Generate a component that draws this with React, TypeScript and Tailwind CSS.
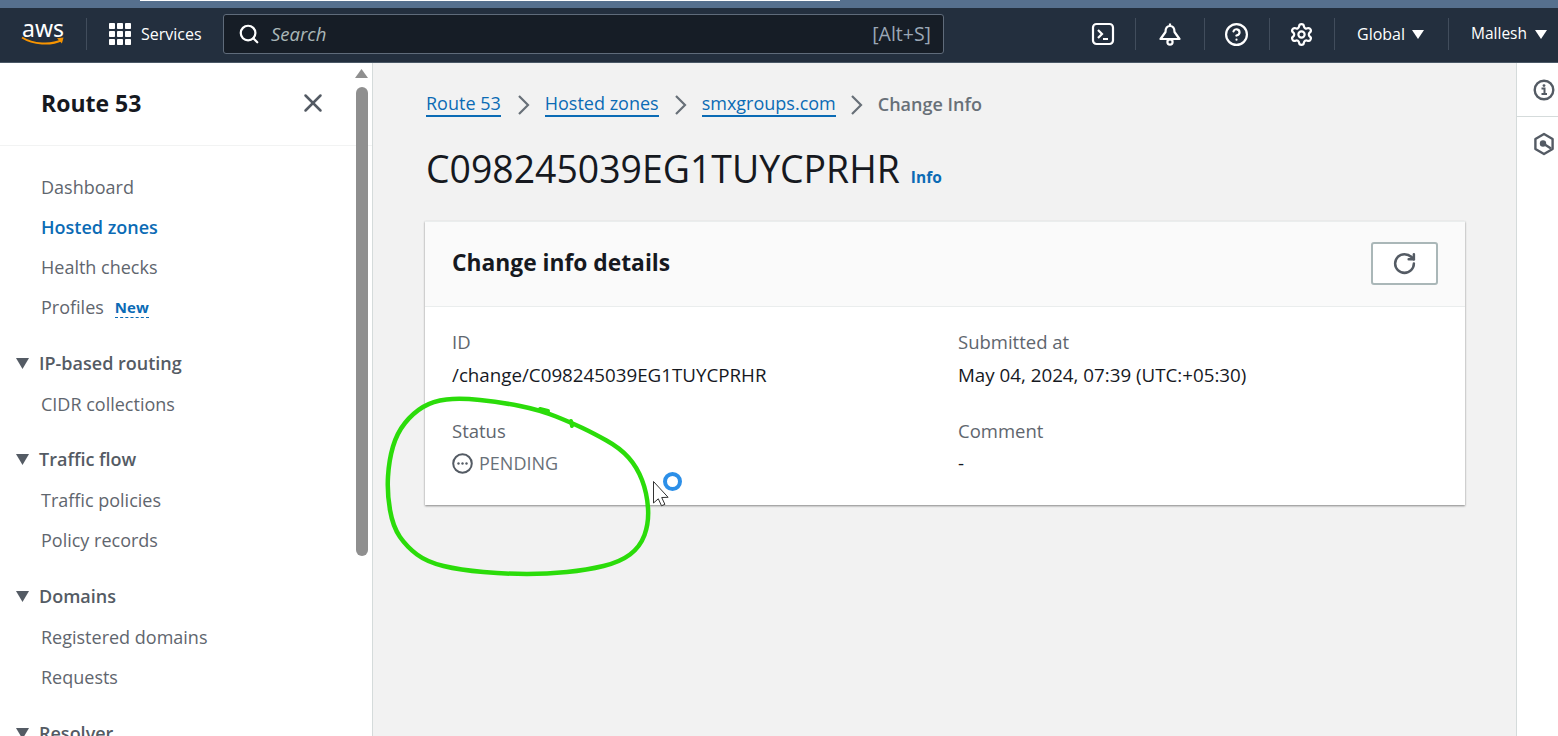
import React from "react";
import { Search, X, CircleHelp, Settings, RotateCw } from "lucide-react";

const font = { fontFamily: '"Open Sans", "Noto Sans", sans-serif' };

function Item({ children, active }: { children: React.ReactNode; active?: boolean }) {
  return (
    <div className={`h-10 flex items-center pl-[41px] text-[18px] ${active ? "font-semibold text-[#0b6bb5]" : "text-[#5f666e]"}`}>
      {children}
    </div>
  );
}

function Section({ title, items, gap }: { title: string; items: string[]; gap: string }) {
  return (
    <div className={gap}>
      <div className="h-[41px] flex items-center pl-[16px] gap-[10px] text-[18px] font-semibold text-[#545b64]">
        <svg width="13" height="11" viewBox="0 0 13 11"><path d="M0 0h13L6.5 11z" fill="#545b64" /></svg>
        <span>{title}</span>
      </div>
      {items.map((i) => <Item key={i}>{i}</Item>)}
    </div>
  );
}

function Crumb({ children, className }: { children: React.ReactNode; className?: string }) {
  return <span className={`text-[18px] text-[#0b6bb5] border-b-2 border-[#0b6bb5] leading-[23px] ${className ?? ""}`}>{children}</span>;
}

function Chev() {
  return (
    <svg width="13" height="20" viewBox="0 0 13 20" fill="none" stroke="#687078" strokeWidth="2.2">
      <path d="M2 1l9 9-9 9" />
    </svg>
  );
}

function Sep() {
  return <div className="w-px h-8 bg-[#414d5c]" />;
}

function Caret() {
  return <svg width="12" height="9" viewBox="0 0 12 9"><path d="M0 0h12L6 9z" fill="#fff" /></svg>;
}

function Field({ label, value, tight }: { label: string; value: React.ReactNode; tight?: boolean }) {
  return (
    <div>
      <div className="text-[18.5px] leading-[24px] text-[#5f666e]">{label}</div>
      <div className={`${tight ? "mt-[8px]" : "mt-[9px]"} text-[18.75px] leading-[24px] text-[#16191f]`}>{value}</div>
    </div>
  );
}

function smooth(p: number[][]) {
  let d = `M${(p[0][0] + p[1][0]) / 2} ${(p[0][1] + p[1][1]) / 2}`;
  for (let i = 1; i <= p.length; i++) {
    const a = p[i % p.length];
    const b = p[(i + 1) % p.length];
    d += ` Q${a[0]} ${a[1]} ${(a[0] + b[0]) / 2} ${(a[1] + b[1]) / 2}`;
  }
  return d;
}

const loop = [[572,423],[540,410],[500,402],[460,398],[433,401],[413,413],[397,433],[389,460],[387,493],[393,527],[407,547],[427,562],[460,570],[507,574],[547,574],[587,570],[620,562],[640,547],[649,523],[647,493],[637,467],[620,448],[593,433]];

export default function App() {
  return (
    <div style={font} className="relative h-[736px] w-[1558px] overflow-hidden bg-[#f2f2f2] flex flex-col">
      <div className="h-2 shrink-0 bg-[#56708e]">
        <div className="ml-[140px] w-[700px] h-px bg-white" />
      </div>
      <header className="h-[55px] pb-[2px] shrink-0 bg-[#232f3e] flex items-center text-white border-b border-[#4a5866]">
        <div className="w-[86px] flex flex-col items-center shrink-0">
          <span className="text-[23px] leading-[18px] text-white -mt-[3px]" style={{ fontFamily: '"Noto Sans", sans-serif' }}>aws</span>
          <svg width="44" height="10" viewBox="0 0 44 10" className="-mt-[1px]">
            <path d="M1 1.5C12 8.5 30 9.5 41 4" stroke="#f79400" strokeWidth="2" fill="none" />
            <path d="M36 2.2l6.5-.6-1.6 6z" fill="#f79400" />
          </svg>
        </div>
        <Sep />
        <div className="flex items-center ml-[22px] gap-[10px] w-[114px] shrink-0">
          <svg width="22" height="22" viewBox="0 0 22 22" fill="#fff">
            {[0, 8, 16].flatMap((y) => [0, 8, 16].map((x) => <rect key={`${x}${y}`} x={x} y={y} width="6" height="6" rx="0.8" />))}
          </svg>
          <span className="text-[16px]">Services</span>
        </div>
        <div className="w-[721px] h-10 shrink-0 bg-[#161d26] border border-[#5f6b7a] rounded-[3px] flex items-center pl-[14px] pr-[12px]">
          <Search size={22} strokeWidth={2.4} className="text-white" />
          <span className="ml-[11px] italic text-[18.5px] text-[#aab7b8]">Search</span>
          <span className="ml-auto text-[19.5px] text-[#9ba7b6]">[Alt+S]</span>
        </div>
        <div className="flex items-center ml-[147px] gap-0">
          <div className="w-[24px] flex justify-center">
            <svg width="24" height="24" viewBox="0 0 24 24" fill="none" stroke="#fff" strokeWidth="2.2">
              <rect x="2" y="2" width="20" height="20" rx="3.5" />
              <path d="M7 8l4 4-4 4M12 17h5" />
            </svg>
          </div>
          <div className="ml-[20px]"><Sep /></div>
          <div className="ml-[22px]">
            <svg width="24" height="24" viewBox="0 0 24 24" fill="none" stroke="#fff" strokeWidth="2.2" strokeLinejoin="round">
              <path d="M12 1.5V4M12 4C8.5 4 7.5 7 7.5 10L2.5 17H21.5L16.5 10C16.5 7 15.5 4 12 4Z" />
              <circle cx="12" cy="20" r="2.6" />
            </svg>
          </div>
          <div className="ml-[22px]"><Sep /></div>
          <div className="ml-[19px]"><CircleHelp size={25} strokeWidth={2.1} /></div>
          <div className="ml-[20px]"><Sep /></div>
          <div className="ml-[19px]"><Settings size={25} strokeWidth={2.1} /></div>
          <div className="ml-[20px]"><Sep /></div>
          <div className="ml-[22px] flex items-center gap-[7px] text-[16px]"><span>Global</span><Caret /></div>
          <div className="ml-[24px]"><Sep /></div>
          <div className="ml-[22px] flex items-center gap-[8px] text-[15.5px]"><span>Mallesh</span><Caret /></div>
        </div>
      </header>
      <div className="flex flex-1 min-h-0">
        <aside className="relative w-[373px] shrink-0 bg-white border-r border-[#d5dbdb] overflow-hidden">
          <div className="h-[83px] pb-[2px] border-b border-[#f2f3f3] flex items-center justify-between pl-[41px] pr-[44px]">
            <span className="text-[23px] font-bold text-[#16191f]">Route 53</span>
            <X size={30} strokeWidth={2} className="text-[#545b64]" />
          </div>
          <div className="pt-[21px]">
            <Item>Dashboard</Item>
            <Item active>Hosted zones</Item>
            <Item>Health checks</Item>
            <Item>
              Profiles
              <span className="ml-[11px] mt-[2px] text-[15px] leading-[19px] font-bold text-[#0b6bb5] border-b border-dashed border-[#0b6bb5]">New</span>
            </Item>
            <Section gap="mt-4" title="IP-based routing" items={["CIDR collections"]} />
            <Section gap="mt-[15px]" title="Traffic flow" items={["Traffic policies", "Policy records"]} />
            <Section gap="mt-4" title="Domains" items={["Registered domains", "Requests"]} />
            <Section gap="mt-4" title="Resolver" items={[]} />
          </div>
          <div className="absolute right-[4px] top-[6px] flex flex-col items-center w-[13px]">
            <svg width="13" height="9" viewBox="0 0 13 9"><path d="M6.5 0L13 9H0z" fill="#8f8f8f" /></svg>
            <div className="mt-[9px] w-[12px] h-[469px] rounded-[6px] bg-[#8f8f8f]" />
          </div>
        </aside>
        <main className="flex-1 min-w-0 pl-[52px] pr-[51px]">
          <div className="h-[23px] flex items-center pl-px gap-[15px] mt-[30px]">
            <Crumb className="mr-px">Route 53</Crumb>
            <Chev />
            <Crumb>Hosted zones</Crumb>
            <Chev />
            <Crumb className="-mr-px">smxgroups.com</Crumb>
            <Chev />
            <span className="text-[18px] font-semibold text-[#687078]">Change Info</span>
          </div>
          <div className="flex items-baseline mt-[31px] pl-px">
            <h1 className="text-[37.4px] leading-[44px] text-[#16191f]">C098245039EG1TUYCPRHR</h1>
            <span className="ml-[11px] text-[15.5px] font-bold text-[#0b6bb5]">Info</span>
          </div>
          <section className="mt-[30px] bg-white shadow-[0_1px_2px_rgba(0,0,0,0.45)] border-t border-[#eaeded]">
            <div className="h-[85px] pb-[2px] bg-[#fafafa] border-b border-[#eaeded] flex items-center justify-between pl-[27px] pr-[27px]">
              <h2 className="text-[22.8px] font-bold text-[#16191f]">Change info details</h2>
              <button className="w-[67px] h-[43px] bg-white border-2 border-[#aab7b8] rounded-[3px] flex items-center justify-center">
                <RotateCw size={25} strokeWidth={2.4} className="text-[#545b64]" />
              </button>
            </div>
            <div className="grid grid-cols-[506px_1fr] pl-[27px] pt-[23px] pb-[30px] gap-y-[32px]">
              <Field label="ID" value="/change/C098245039EG1TUYCPRHR" />
              <Field label="Submitted at" value="May 04, 2024, 07:39 (UTC:+05:30)" />
              <Field label="Status" tight value={
                <span className="flex items-center gap-[6px] text-[18px] text-[#687078]">
                  <svg width="21" height="21" viewBox="0 0 21 21" fill="none">
                    <circle cx="10.5" cy="10.5" r="9.3" stroke="#545b64" strokeWidth="2" />
                    <circle cx="6.5" cy="10.5" r="1.2" fill="#545b64" />
                    <circle cx="10.5" cy="10.5" r="1.2" fill="#545b64" />
                    <circle cx="14.5" cy="10.5" r="1.2" fill="#545b64" />
                  </svg>
                  PENDING
                </span>
              } />
              <Field label="Comment" tight value="-" />
            </div>
          </section>
        </main>
        <aside className="w-[42px] shrink-0 bg-white border-l border-[#d5dbdb]">
          <div className="h-[54px] border-b border-[#d5dbdb] flex items-center justify-center pl-[13px]">
            <svg width="22" height="22" viewBox="0 0 22 22" fill="none">
              <circle cx="11" cy="11" r="9.3" stroke="#545b64" strokeWidth="2.4" />
              <path d="M8.5 9.5h3v5M8.5 15h5.5" stroke="#545b64" strokeWidth="2" />
              <circle cx="11" cy="6.6" r="1.4" fill="#545b64" />
            </svg>
          </div>
          <div className="h-[56px] flex items-center justify-center pl-[13px] pb-[2px]">
            <svg width="22" height="24" viewBox="0 0 22 24" fill="none">
              <path d="M11 2l8.6 5v10L11 22l-8.6-5V7z" stroke="#545b64" strokeWidth="2.4" strokeLinejoin="round" />
              <circle cx="10" cy="11.5" r="3.2" fill="#545b64" />
              <path d="M11 12l7 4.5" stroke="#545b64" strokeWidth="2.4" />
            </svg>
          </div>
        </aside>
      </div>
      <svg className="absolute inset-0 pointer-events-none" width="1558" height="736" viewBox="0 0 1558 736" fill="none">
        <path d={smooth(loop)} stroke="#2bdc0a" strokeWidth="4.5" strokeLinecap="round" />
        <path d="M540 409l8 2M571 421l1 5" stroke="#2bdc0a" strokeWidth="4" strokeLinecap="round" />
        <circle cx="672.5" cy="481.5" r="7.5" stroke="#2c8fe8" strokeWidth="4" />
        <path d="M653.5 481.5V503l4.8-4.2 3.2 7 3.4-1.5-3.2-6.8 6.4-.2z" fill="#fff" stroke="#333" strokeWidth="1" />
      </svg>
    </div>
  );
}
